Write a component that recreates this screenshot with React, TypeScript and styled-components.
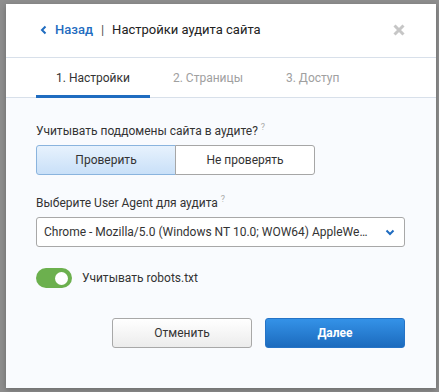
import styled, { createGlobalStyle } from 'styled-components'
import { useState } from 'react'

const GlobalStyle = createGlobalStyle`
  html, body {
    margin: 0;
    padding: 0;
    background: #8e8e8e;
    font-family: Roboto, "Noto Sans", "Liberation Sans", sans-serif;
    color: #333;
  }
  * { box-sizing: border-box; }
`

const Overlay = styled.div`
  width: 439px;
  height: 392px;
  padding: 4px 0 0 6px;
  overflow: hidden;
`

const Modal = styled.div`
  width: 430px;
  height: 384px;
  background: #f9fbfe;
  box-shadow: 0 2px 6px rgba(0, 0, 0, 0.25);
  display: flex;
  flex-direction: column;
`

const Header = styled.div`
  height: 54px;
  background: #fff;
  border-bottom: 1px solid #d8e0ea;
  display: flex;
  align-items: center;
  padding: 0 31px 2px 34px;
  font-size: 13px;
`

const Back = styled.a`
  display: flex;
  align-items: center;
  gap: 8px;
  color: #1f6cc0;
  font-weight: 500;
  cursor: pointer;
`

const Divider = styled.span`
  margin: 0 8px;
  color: #555;
`

const Title = styled.span`
  flex: 1;
  color: #222;
`

const Close = styled.button`
  border: 0;
  background: none;
  padding: 0;
  display: flex;
  cursor: pointer;
`

const Tabs = styled.div`
  height: 40px;
  background: #fff;
  border-bottom: 1px solid #d8e0ea;
  display: flex;
  padding-left: 30px;
`

const Tab = styled.div<{ active?: boolean }>`
  padding: 3px 20px 0;
  display: flex;
  align-items: center;
  font-size: 12px;
  color: ${p => (p.active ? '#333' : '#a0a0a0')};
  border-bottom: 3px solid ${p => (p.active ? '#1f6cc0' : 'transparent')};
  margin-bottom: -1px;
  & + & {
    margin-left: 3px;
  }
`

const Body = styled.div`
  flex: 1;
  padding: 25px 31px 0 30px;
  display: flex;
  flex-direction: column;
`

const Label = styled.div`
  font-size: 12px;
  line-height: 16px;
  color: #333;
  margin-bottom: 6px;
  sup {
    font-size: 9px;
    color: #aaa;
    margin-left: 3px;
    vertical-align: 5px;
    line-height: 0;
  }
`

const Segmented = styled.div`
  display: flex;
  margin-bottom: 20px;
`

const SegButton = styled.button<{ active?: boolean }>`
  width: 140px;
  height: 30px;
  font: inherit;
  font-size: 12px;
  color: #333;
  cursor: pointer;
  border: 1px solid ${p => (p.active ? '#8ab4de' : '#a6a6a6')};
  background: ${p => (p.active ? 'linear-gradient(#e7f2fd, #c9e0f8)' : '#fff')};
  border-radius: ${p => (p.active ? '3px 0 0 3px' : '0 3px 3px 0')};
  & + & {
    margin-left: -1px;
  }
`

const Select = styled.div`
  height: 30px;
  background: #fff;
  border: 1px solid #a8a8a8;
  border-radius: 3px;
  display: flex;
  align-items: center;
  gap: 14px;
  padding: 0 9px 0 7px;
  font-size: 12px;
  color: #333;
  margin-bottom: 21px;
  span {
    flex: 1;
    min-width: 0;
    white-space: nowrap;
    overflow: hidden;
    text-overflow: ellipsis;
  }
`

const ToggleRow = styled.label`
  display: flex;
  align-items: center;
  gap: 10px;
  font-size: 12px;
  cursor: pointer;
`

const Switch = styled.span<{ on: boolean }>`
  width: 36px;
  height: 20px;
  border-radius: 10px;
  background: ${p => (p.on ? '#6cb04e' : '#ccc')};
  display: flex;
  align-items: center;
  justify-content: ${p => (p.on ? 'flex-end' : 'flex-start')};
  padding: 0 4px;
  &::after {
    content: '';
    width: 13px;
    height: 13px;
    border-radius: 50%;
    background: #fff;
  }
`

const Footer = styled.div`
  display: flex;
  justify-content: flex-end;
  gap: 13px;
  margin-top: 30px;
`

const Button = styled.button<{ primary?: boolean }>`
  width: 140px;
  height: 30px;
  border-radius: 3px;
  font: inherit;
  font-size: 12px;
  cursor: pointer;
  border: 1px solid ${p => (p.primary ? '#2573c6' : '#a8a8a8')};
  background: ${p => (p.primary ? 'linear-gradient(#3492e8, #1c6bbe)' : 'linear-gradient(#fff, #ececec)')};
  color: ${p => (p.primary ? '#fff' : '#333')};
  font-weight: ${p => (p.primary ? 700 : 400)};
`

export default function App() {
  const [sub, setSub] = useState(true)
  const [robots, setRobots] = useState(true)

  return (
    <Overlay>
      <GlobalStyle />
      <Modal>
        <Header>
          <Back>
            <svg width="7" height="10" viewBox="0 0 7 10">
              <polyline points="5.5,1.5 2,5 5.5,8.5" fill="none" stroke="#1f6cc0" strokeWidth="2" />
            </svg>
            Назад
          </Back>
          <Divider>|</Divider>
          <Title>Настройки аудита сайта</Title>
          <Close>
            <svg width="12" height="12" viewBox="0 0 12 12">
              <path d="M1.5 1.5 L10.5 10.5 M10.5 1.5 L1.5 10.5" stroke="#c6c6c6" strokeWidth="3" />
            </svg>
          </Close>
        </Header>
        <Tabs>
          <Tab active>1. Настройки</Tab>
          <Tab>2. Страницы</Tab>
          <Tab>3. Доступ</Tab>
        </Tabs>
        <Body>
          <Label>
            Учитывать поддомены сайта в аудите?<sup>?</sup>
          </Label>
          <Segmented>
            <SegButton active={sub} onClick={() => setSub(true)}>Проверить</SegButton>
            <SegButton active={!sub} onClick={() => setSub(false)}>Не проверять</SegButton>
          </Segmented>
          <Label>
            Выберите User Agent для аудита<sup>?</sup>
          </Label>
          <Select>
            <span>Chrome - Mozilla/5.0 (Windows NT 10.0; WOW64) AppleWebKit/537.36</span>
            <svg width="10" height="7" viewBox="0 0 10 7">
              <polyline points="1.5,1.5 5,5 8.5,1.5" fill="none" stroke="#1f6cc0" strokeWidth="2" />
            </svg>
          </Select>
          <ToggleRow onClick={() => setRobots(!robots)}>
            <Switch on={robots} />
            Учитывать robots.txt
          </ToggleRow>
          <Footer>
            <Button>Отменить</Button>
            <Button primary>Далее</Button>
          </Footer>
        </Body>
      </Modal>
    </Overlay>
  )
}
